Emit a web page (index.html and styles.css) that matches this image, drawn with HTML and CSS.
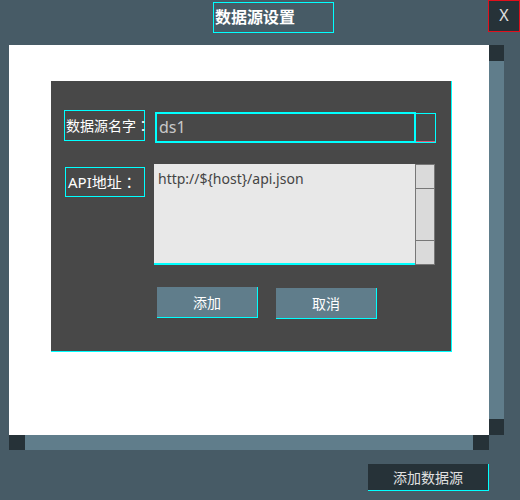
FILE: index.html
```html
<!DOCTYPE html>
<html>
<head>
<meta charset="utf-8">
<link rel="stylesheet" href="styles.css">
</head>
<body>
<div class="app">
  <div class="header">
    <div class="title">数据源设置</div>
    <div class="close">X</div>
  </div>
  <div class="viewport">
    <div class="row-main">
      <div class="canvas">
        <div class="dialog">
          <div class="form-row">
            <div class="label label-name">数据源名字<span class="colon">：</span></div>
            <div class="input">ds1</div>
            <div class="input-scroll"></div>
          </div>
          <div class="form-row row-api">
            <div class="label label-api"><span class="latin">API</span>地址<span class="colon">：</span></div>
            <div class="textarea">http://${host}/api.json</div>
            <div class="ta-scroll">
              <div class="ta-up"></div>
              <div class="ta-thumb"></div>
              <div class="ta-down"></div>
            </div>
          </div>
          <div class="actions">
            <div class="btn btn-add">添加</div>
            <div class="btn btn-cancel">取消</div>
          </div>
        </div>
      </div>
      <div class="vscroll">
        <div class="sb-end"></div>
        <div class="sb-track"></div>
        <div class="sb-end"></div>
      </div>
    </div>
    <div class="hscroll">
      <div class="sb-end"></div>
      <div class="sb-track"></div>
      <div class="sb-end"></div>
    </div>
  </div>
  <div class="footer">
    <div class="add-source">添加数据源</div>
  </div>
</div>
</body>
</html>
```

FILE: styles.css
```css
html, body {
  margin: 0;
  padding: 0;
}
body {
  background: #475b66;
  width: 520px;
  height: 500px;
  overflow: hidden;
  font-family: "Noto Sans", "Noto Sans CJK SC", sans-serif;
}
.app {
  display: flex;
  flex-direction: column;
  width: 520px;
  height: 500px;
}
.header {
  display: flex;
  align-items: flex-start;
  height: 45px;
}
.title {
  box-sizing: border-box;
  margin-left: 213px;
  margin-top: 2px;
  width: 121px;
  height: 31px;
  border: 1px solid #00ffff;
  color: #ffffff;
  font-weight: bold;
  font-size: 16px;
  line-height: 27px;
  padding-left: 1px;
  font-family: "Noto Sans CJK SC", sans-serif;
}
.close {
  box-sizing: border-box;
  margin-left: auto;
  width: 32px;
  height: 32px;
  background: #263238;
  border: 1px solid #e0101c;
  color: #e0e0e0;
  font-size: 16px;
  text-align: center;
  line-height: 29px;
  font-family: "Noto Sans", sans-serif;
}
.viewport {
  margin-left: 9px;
  width: 495px;
}
.row-main {
  display: flex;
  height: 390px;
}
.canvas {
  width: 480px;
  height: 390px;
  background: #ffffff;
  padding: 36px 0 0 42px;
  box-sizing: border-box;
}
.dialog {
  box-sizing: border-box;
  width: 401px;
  height: 271px;
  background: #484848;
  border-right: 1px solid #00ffff;
  border-bottom: 1px solid #00ffff;
  padding: 29px 0 0 13px;
}
.form-row {
  display: flex;
  align-items: flex-start;
}
.label {
  box-sizing: border-box;
  border: 1px solid #00ffff;
  color: #ffffff;
  font-size: 14px;
  font-family: "Noto Sans CJK SC", sans-serif;
  white-space: nowrap;
}
.colon {
  font-family: "Noto Sans CJK TC", sans-serif;
}
.latin {
  font-family: "Noto Sans", sans-serif;
}
.label-name {
  width: 81px;
  height: 31px;
  line-height: 28px;
  padding-left: 1px;
}
.input {
  box-sizing: border-box;
  margin-left: 10px;
  margin-top: 2px;
  width: 261px;
  height: 31px;
  border: 2px solid #00ffff;
  color: #c8c8c8;
  font-size: 16px;
  line-height: 26px;
  padding-left: 2px;
}
.input-scroll {
  box-sizing: border-box;
  margin-top: 3px;
  width: 21px;
  height: 30px;
  margin-left: -1px;
  border: 1px solid #00ffff;
  box-shadow: inset 0 -1px 0 #e05a7a;
}
.row-api {
  margin-top: 21px;
}
.label-api {
  margin-left: 1px;
  margin-top: 3px;
  width: 80px;
  height: 30px;
  line-height: 28px;
  padding-left: 2px;
  font-size: 15px;
}
.textarea {
  box-sizing: border-box;
  margin-left: 9px;
  width: 261px;
  height: 101px;
  background: #e8e8e8;
  border-bottom: 2px solid #00ffff;
  color: #444444;
  font-size: 14px;
  line-height: 20px;
  padding: 5px 0 0 4px;
}
.ta-scroll {
  box-sizing: border-box;
  width: 20px;
  height: 101px;
  background: #dadada;
  border: 1px solid #777777;
  display: flex;
  flex-direction: column;
}
.ta-up {
  height: 23px;
  border-bottom: 1px solid #777777;
}
.ta-thumb {
  height: 51px;
  border-bottom: 1px solid #777777;
}
.ta-down {
  flex: 1;
}
.actions {
  display: flex;
  align-items: flex-start;
  margin-top: 22px;
  margin-left: 93px;
  gap: 18px;
}
.btn {
  box-sizing: border-box;
  width: 101px;
  height: 31px;
  background: #607d8b;
  border-right: 1px solid #00ffff;
  border-bottom: 1px solid #00ffff;
  color: #ffffff;
  font-size: 14px;
  text-align: center;
  line-height: 30px;
  font-family: "Noto Sans CJK SC", sans-serif;
}
.btn-cancel {
  margin-top: 1px;
}
.vscroll {
  width: 15px;
  height: 390px;
  display: flex;
  flex-direction: column;
}
.vscroll .sb-end {
  height: 16px;
  background: #263238;
}
.vscroll .sb-track {
  flex: 1;
  background: #607d8b;
}
.hscroll {
  width: 480px;
  height: 15px;
  display: flex;
}
.hscroll .sb-end {
  width: 16px;
  background: #263238;
}
.hscroll .sb-track {
  flex: 1;
  background: #607d8b;
}
.footer {
  display: flex;
  padding-top: 14px;
  padding-left: 368px;
}
.add-source {
  box-sizing: border-box;
  width: 121px;
  height: 27px;
  background: #263238;
  border-right: 1px solid #00ffff;
  border-bottom: 1px solid #00ffff;
  color: #e0e0e0;
  font-size: 14px;
  text-align: center;
  line-height: 26px;
  font-family: "Noto Sans CJK SC", sans-serif;
}
```
